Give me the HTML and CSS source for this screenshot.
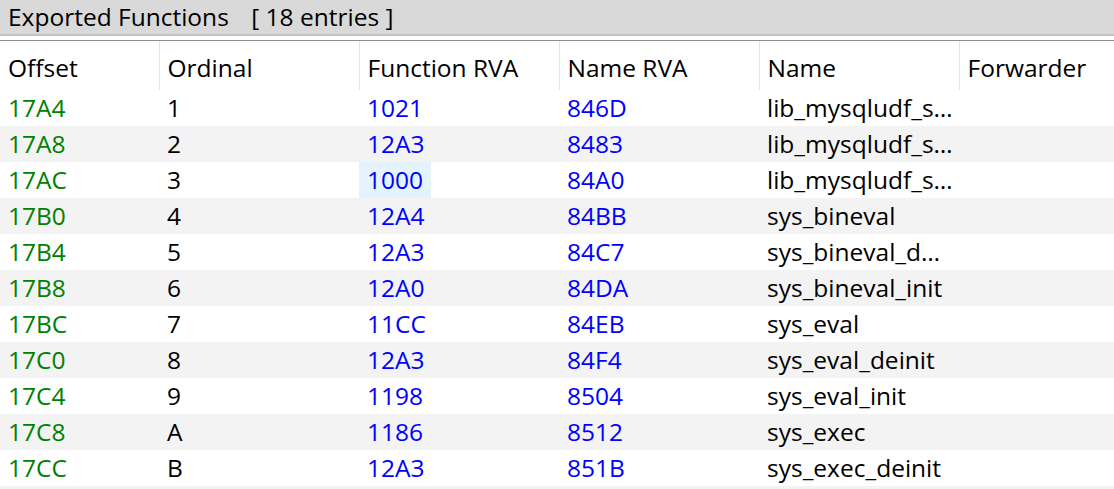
FILE: index.html
```html
<!DOCTYPE html>
<html lang="en">
<head>
  <meta charset="UTF-8">
  <title>Exported Functions</title>
  <link rel="stylesheet" href="styles.css">
</head>
<body>
  <div class="title-bar">
    <span>Exported Functions</span>
    <span class="count">[ 18 entries ]</span>
  </div>

  <div class="grid">
    <table>
      <colgroup>
        <col class="c-first"><col><col><col><col><col>
      </colgroup>
      <thead>
        <tr><th>Offset</th><th>Ordinal</th><th>Function RVA</th><th>Name RVA</th><th>Name</th><th>Forwarder</th></tr>
      </thead>
      <tbody>
        <tr><td class="off">17A4</td><td>1</td><td class="rva">1021</td><td class="rva">846D</td><td class="name">lib_mysqludf_sys_info</td><td></td></tr>
        <tr><td class="off">17A8</td><td>2</td><td class="rva">12A3</td><td class="rva">8483</td><td class="name">lib_mysqludf_sys_info_deinit</td><td></td></tr>
        <tr><td class="off">17AC</td><td>3</td><td class="rva"><span class="sel">1000</span></td><td class="rva">84A0</td><td class="name">lib_mysqludf_sys_info_init</td><td></td></tr>
        <tr><td class="off">17B0</td><td>4</td><td class="rva">12A4</td><td class="rva">84BB</td><td class="name">sys_bineval</td><td></td></tr>
        <tr><td class="off">17B4</td><td>5</td><td class="rva">12A3</td><td class="rva">84C7</td><td class="name">sys_bineval_deinit</td><td></td></tr>
        <tr><td class="off">17B8</td><td>6</td><td class="rva">12A0</td><td class="rva">84DA</td><td class="name">sys_bineval_init</td><td></td></tr>
        <tr><td class="off">17BC</td><td>7</td><td class="rva">11CC</td><td class="rva">84EB</td><td class="name">sys_eval</td><td></td></tr>
        <tr><td class="off">17C0</td><td>8</td><td class="rva">12A3</td><td class="rva">84F4</td><td class="name">sys_eval_deinit</td><td></td></tr>
        <tr><td class="off">17C4</td><td>9</td><td class="rva">1198</td><td class="rva">8504</td><td class="name">sys_eval_init</td><td></td></tr>
        <tr><td class="off">17C8</td><td>A</td><td class="rva">1186</td><td class="rva">8512</td><td class="name">sys_exec</td><td></td></tr>
        <tr><td class="off">17CC</td><td>B</td><td class="rva">12A3</td><td class="rva">851B</td><td class="name">sys_exec_deinit</td><td></td></tr>
        <tr class="tail"><td></td><td></td><td></td><td></td><td></td><td></td></tr>
      </tbody>
    </table>
  </div>
</body>
</html>
```

FILE: styles.css
```css
* { box-sizing: border-box; }
html, body { margin: 0; height: 100%; overflow: hidden; background: #fff; }
body { font-family: "Open Sans", "Noto Sans", sans-serif; font-size: 24.5px; color: #000; }

/* title bar */
.title-bar { height: 36px; background: #d9d9d9; border-bottom: 2px solid #c4c4c4; padding: 0 8px; line-height: 33px; white-space: nowrap; }
.title-bar .count { margin-left: 16px; }

/* grid */
.grid { margin-top: 4px; border-top: 1px solid #8e8e8e; height: 449px; overflow: hidden; }
table { width: 1114px; table-layout: fixed; border-collapse: collapse; }
col { width: 200px; }
col.c-first { width: 159px; }
th, td { padding: 0 8px; text-align: left; white-space: nowrap; overflow: hidden; text-overflow: ellipsis; }
th { height: 49px; font-weight: normal; padding-top: 4px; border-right: 1px solid #e5e5e5; }
th:last-child { border-right: none; }
td { height: 36px; line-height: 36px; }
tbody tr:nth-child(even) { background: #f3f3f3; }
td.off { color: #008000; }
td.rva { color: #0000ff; }
td.name { padding-right: 6px; }
.sel { display: inline-block; background: #e5f3ff; margin-left: -8px; padding: 0 8px; height: 36px; vertical-align: top; }
```
